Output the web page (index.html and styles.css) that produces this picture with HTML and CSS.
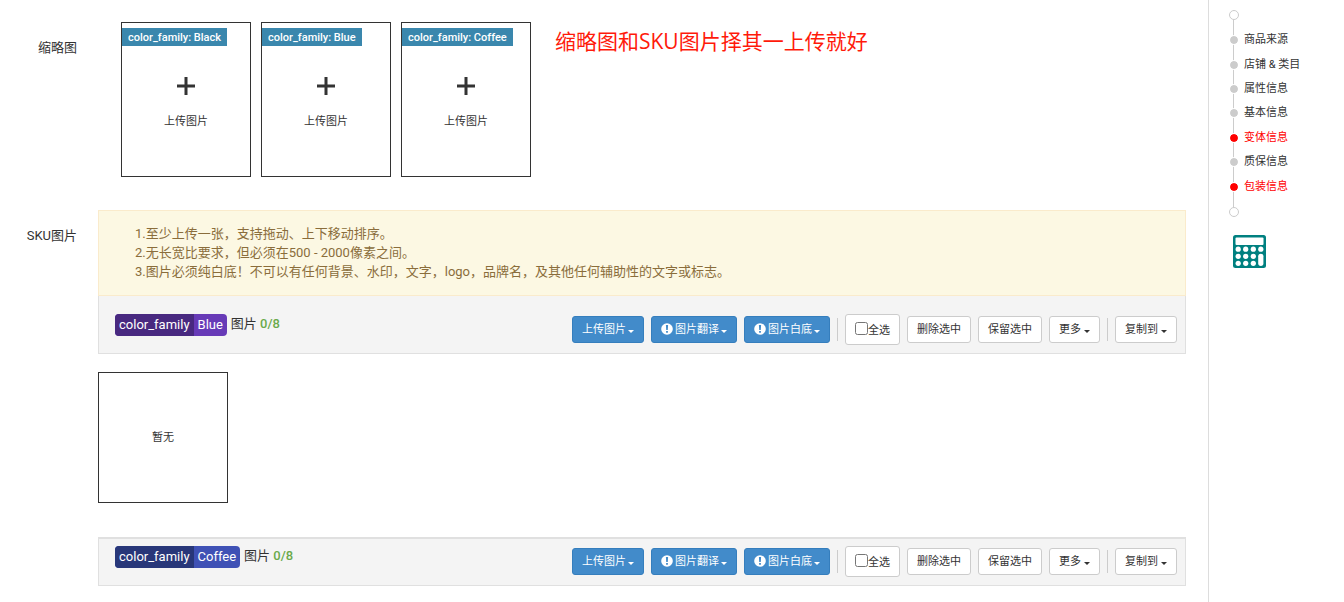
FILE: index.html
```html
<!DOCTYPE html>
<html lang="zh-CN">
<head>
<meta charset="utf-8">
<meta name="viewport" content="width=device-width, initial-scale=1">
<title>变体信息</title>
<link rel="stylesheet" href="styles.css">
</head>
<body>
<svg class="sprite" aria-hidden="true">
  <symbol id="notice" viewBox="0 0 12 12">
    <circle cx="6" cy="6" r="5.8" fill="#fff"/>
    <path d="M4.9 2h2.2L6.8 7H5.2zM5.1 7.9h1.8v1.8H5.1z" fill="#428bca"/>
  </symbol>
</svg>
<div class="page">
  <main class="main">
    <section class="row">
      <h2 class="row-label">缩略图</h2>
      <div class="thumbs">
        <button class="thumb" type="button"><span class="thumb-tag">color_family: Black</span><svg class="plus" viewBox="0 0 18 18"><path d="M0 9h18M9 0v18"/></svg><span>上传图片</span></button>
        <button class="thumb" type="button"><span class="thumb-tag">color_family: Blue</span><svg class="plus" viewBox="0 0 18 18"><path d="M0 9h18M9 0v18"/></svg><span>上传图片</span></button>
        <button class="thumb" type="button"><span class="thumb-tag">color_family: Coffee</span><svg class="plus" viewBox="0 0 18 18"><path d="M0 9h18M9 0v18"/></svg><span>上传图片</span></button>
        <p class="note">缩略图和SKU图片择其一上传就好</p>
      </div>
    </section>
    <section class="row">
      <h2 class="row-label">SKU图片</h2>
      <div class="sku">
        <div class="tips">
          <p>1.至少上传一张，支持拖动、上下移动排序。</p>
          <p>2.无长宽比要求，但必须在500 - 2000像素之间。</p>
          <p>3.图片必须纯白底！不可以有任何背景、水印，文字，logo，品牌名，及其他任何辅助性的文字或标志。</p>
        </div>
        <div class="toolbar toolbar-first">
          <div class="variant">
            <span class="tag tag-purple"><span class="tag-name">color_family</span><span class="tag-value">Blue</span></span>
            <span>图片 <b class="count">0/8</b></span>
          </div>
          <div class="actions">
            <button class="btn btn-primary" type="button">上传图片<i class="caret"></i></button>
            <button class="btn btn-primary" type="button"><svg class="notice"><use href="#notice"/></svg>图片翻译<i class="caret"></i></button>
            <button class="btn btn-primary" type="button"><svg class="notice"><use href="#notice"/></svg>图片白底<i class="caret"></i></button>
            <span class="divider"></span>
            <label class="btn btn-check"><input class="check" type="checkbox"><span class="check-text">全选</span></label>
            <button class="btn" type="button">删除选中</button>
            <button class="btn" type="button">保留选中</button>
            <button class="btn" type="button">更多<i class="caret caret-dark"></i></button>
            <span class="divider"></span>
            <button class="btn" type="button">复制到<i class="caret caret-dark"></i></button>
          </div>
        </div>
        <div class="empty">暂无</div>
        <div class="toolbar toolbar-next">
          <div class="variant">
            <span class="tag tag-blue"><span class="tag-name">color_family</span><span class="tag-value">Coffee</span></span>
            <span>图片 <b class="count">0/8</b></span>
          </div>
          <div class="actions">
            <button class="btn btn-primary" type="button">上传图片<i class="caret"></i></button>
            <button class="btn btn-primary" type="button"><svg class="notice"><use href="#notice"/></svg>图片翻译<i class="caret"></i></button>
            <button class="btn btn-primary" type="button"><svg class="notice"><use href="#notice"/></svg>图片白底<i class="caret"></i></button>
            <span class="divider"></span>
            <label class="btn btn-check"><input class="check" type="checkbox"><span class="check-text">全选</span></label>
            <button class="btn" type="button">删除选中</button>
            <button class="btn" type="button">保留选中</button>
            <button class="btn" type="button">更多<i class="caret caret-dark"></i></button>
            <span class="divider"></span>
            <button class="btn" type="button">复制到<i class="caret caret-dark"></i></button>
          </div>
        </div>
      </div>
    </section>
  </main>
  <aside class="side">
    <nav class="steps">
      <span class="end"></span>
      <a class="step" href="#">商品来源</a>
      <a class="step" href="#">店铺 &amp; 类目</a>
      <a class="step" href="#">属性信息</a>
      <a class="step" href="#">基本信息</a>
      <a class="step step-active" href="#">变体信息</a>
      <a class="step" href="#">质保信息</a>
      <a class="step step-active" href="#">包装信息</a>
      <span class="end"></span>
    </nav>
    <button class="calc" type="button" aria-label="计算器">
      <svg viewBox="0 0 33 33" width="33" height="33">
        <rect width="33" height="33" rx="2.5" fill="#008080"/>
        <g fill="#fff">
          <rect x="2.5" y="2.5" width="28" height="7.5" rx="1"/>
          <circle cx="5.2" cy="14.2" r="2.6"/><circle cx="12.7" cy="14.2" r="2.6"/><circle cx="20.3" cy="14.2" r="2.6"/><circle cx="27.8" cy="14.2" r="2.6"/>
          <circle cx="5.2" cy="21.3" r="2.6"/><circle cx="12.7" cy="21.3" r="2.6"/><circle cx="20.3" cy="21.3" r="2.6"/>
          <circle cx="5.2" cy="28.3" r="2.6"/><circle cx="12.7" cy="28.3" r="2.6"/><circle cx="20.3" cy="28.3" r="2.6"/>
          <rect x="25.2" y="18.7" width="5.2" height="12.2" rx="2.6"/>
        </g>
      </svg>
    </button>
  </aside>
</div>
</body>
</html>
```
FILE: styles.css
```css
*,
*::before {
  box-sizing: border-box;
}

body {
  margin: 0;
  background: #fff;
  color: #333;
  font: 13px/19px Roboto, "Noto Sans CJK SC", sans-serif;
}

button {
  font: inherit;
  color: inherit;
}

p,
h2 {
  margin: 0;
}

.sprite {
  display: none;
}

.page {
  display: flex;
  min-height: 100vh;
}

.main {
  flex: 1;
  display: flex;
  flex-direction: column;
  gap: 33px;
  padding: 22px 22px 16px 0;
}

.row {
  display: grid;
  grid-template-columns: 77px 1fr;
  column-gap: 21px;
}

.row-label {
  padding-top: 16px;
  font-size: 13px;
  font-weight: 400;
  text-align: right;
}

.thumbs {
  display: flex;
  gap: 10px;
  padding-left: 23px;
}

.thumb {
  display: flex;
  flex-direction: column;
  align-items: center;
  width: 130px;
  height: 155px;
  padding: 5px 0 0;
  border: 1px solid #333;
  background: #fff;
  font-size: 11px;
  line-height: 18px;
}

.thumb-tag {
  align-self: flex-start;
  height: 18px;
  padding: 1px 6px 0;
  background: #3a87ad;
  color: #fff;
  font-weight: 500;
  line-height: 17px;
}

.plus {
  width: 18px;
  height: 18px;
  margin: 31px 0 18px;
  fill: none;
  stroke: #333;
  stroke-width: 3;
}

.note {
  padding: 4px 0 0 14px;
  color: #ff1a0a;
  font: 21px/30px "Open Sans", "Noto Sans CJK SC", sans-serif;
}

.tips {
  padding: 13px 36px 14px;
  border: 1px solid #faebcc;
  background: #fcf8e3;
  color: #8a6d3b;
}

.toolbar {
  display: flex;
  justify-content: space-between;
  border: 1px solid #e0e0e0;
  background: #f4f4f4;
}

.toolbar-first {
  padding: 18px 8px 8px 16px;
  border-top: 0;
}

.toolbar-next {
  padding: 7px 8px 8px 16px;
  border-top-width: 2px;
}

.variant {
  display: flex;
  gap: 4px;
}

.tag {
  display: flex;
  height: 22px;
  border-radius: 4px;
  overflow: hidden;
  color: #fff;
  line-height: 22px;
}

.tag-name,
.tag-value {
  padding: 0 4px;
}

.tag-purple {
  background: #673ab7;
}

.tag-purple .tag-name {
  background: #482980;
}

.tag-blue {
  background: #3f51b5;
}

.tag-blue .tag-name {
  background: #283779;
}

.count {
  color: #6aaa4b;
  font-weight: 500;
}

.actions {
  display: flex;
  align-items: center;
  gap: 7px;
}

.btn {
  display: flex;
  align-items: center;
  height: 27px;
  padding: 1px 9px 0;
  border: 1px solid #ccc;
  border-radius: 3px;
  background: #fff;
  font-size: 11px;
  line-height: 16px;
  white-space: nowrap;
}

.btn-primary {
  border-color: #357ebd;
  background: #428bca;
  color: #fff;
}

.btn-check {
  height: 31px;
}

.check {
  width: 13px;
  height: 13px;
  margin: 0 0 3px;
}

.check-text {
  padding-top: 2px;
}

.notice {
  width: 12px;
  height: 12px;
  margin: 0 2px 2px 0;
}

.caret {
  margin: 2px 0 0 2px;
  border: 3px solid transparent;
  border-top-color: currentColor;
  border-bottom: 0;
}

.caret-dark {
  margin-left: 3px;
}

.divider {
  width: 1px;
  height: 23px;
  background: #ccc;
}

.empty {
  display: grid;
  place-items: center;
  width: 130px;
  height: 131px;
  margin: 18px 0 34px;
  border: 1px solid #333;
  font-size: 11px;
}

.side {
  flex: 0 0 136px;
  padding: 10px 0 0 20px;
  border-left: 1px solid #ddd;
}

.steps {
  display: grid;
  grid-template-rows: 18px repeat(7, 1fr) 18px;
  height: 207px;
  background: linear-gradient(#ccc, #ccc) 4px 0 / 1px 100% no-repeat;
}

.end {
  width: 10px;
  height: 10px;
  border: 1px solid #ccc;
  border-radius: 50%;
  background: #fff;
}

.end:last-child {
  align-self: end;
}

.step {
  display: flex;
  align-items: center;
  gap: 5px;
  color: #333;
  font-size: 11px;
  line-height: 16px;
  text-decoration: none;
}

.step::before {
  content: "";
  width: 10px;
  height: 10px;
  border: 1px solid #fff;
  border-radius: 50%;
  background: #ccc;
  background-clip: padding-box;
}

.step-active {
  color: #f00;
}

.step-active::before {
  background-color: #f00;
}

.calc {
  display: block;
  margin: 18px 0 0 4px;
  padding: 0;
  border: 0;
  background: none;
}

.calc svg {
  display: block;
}
```
